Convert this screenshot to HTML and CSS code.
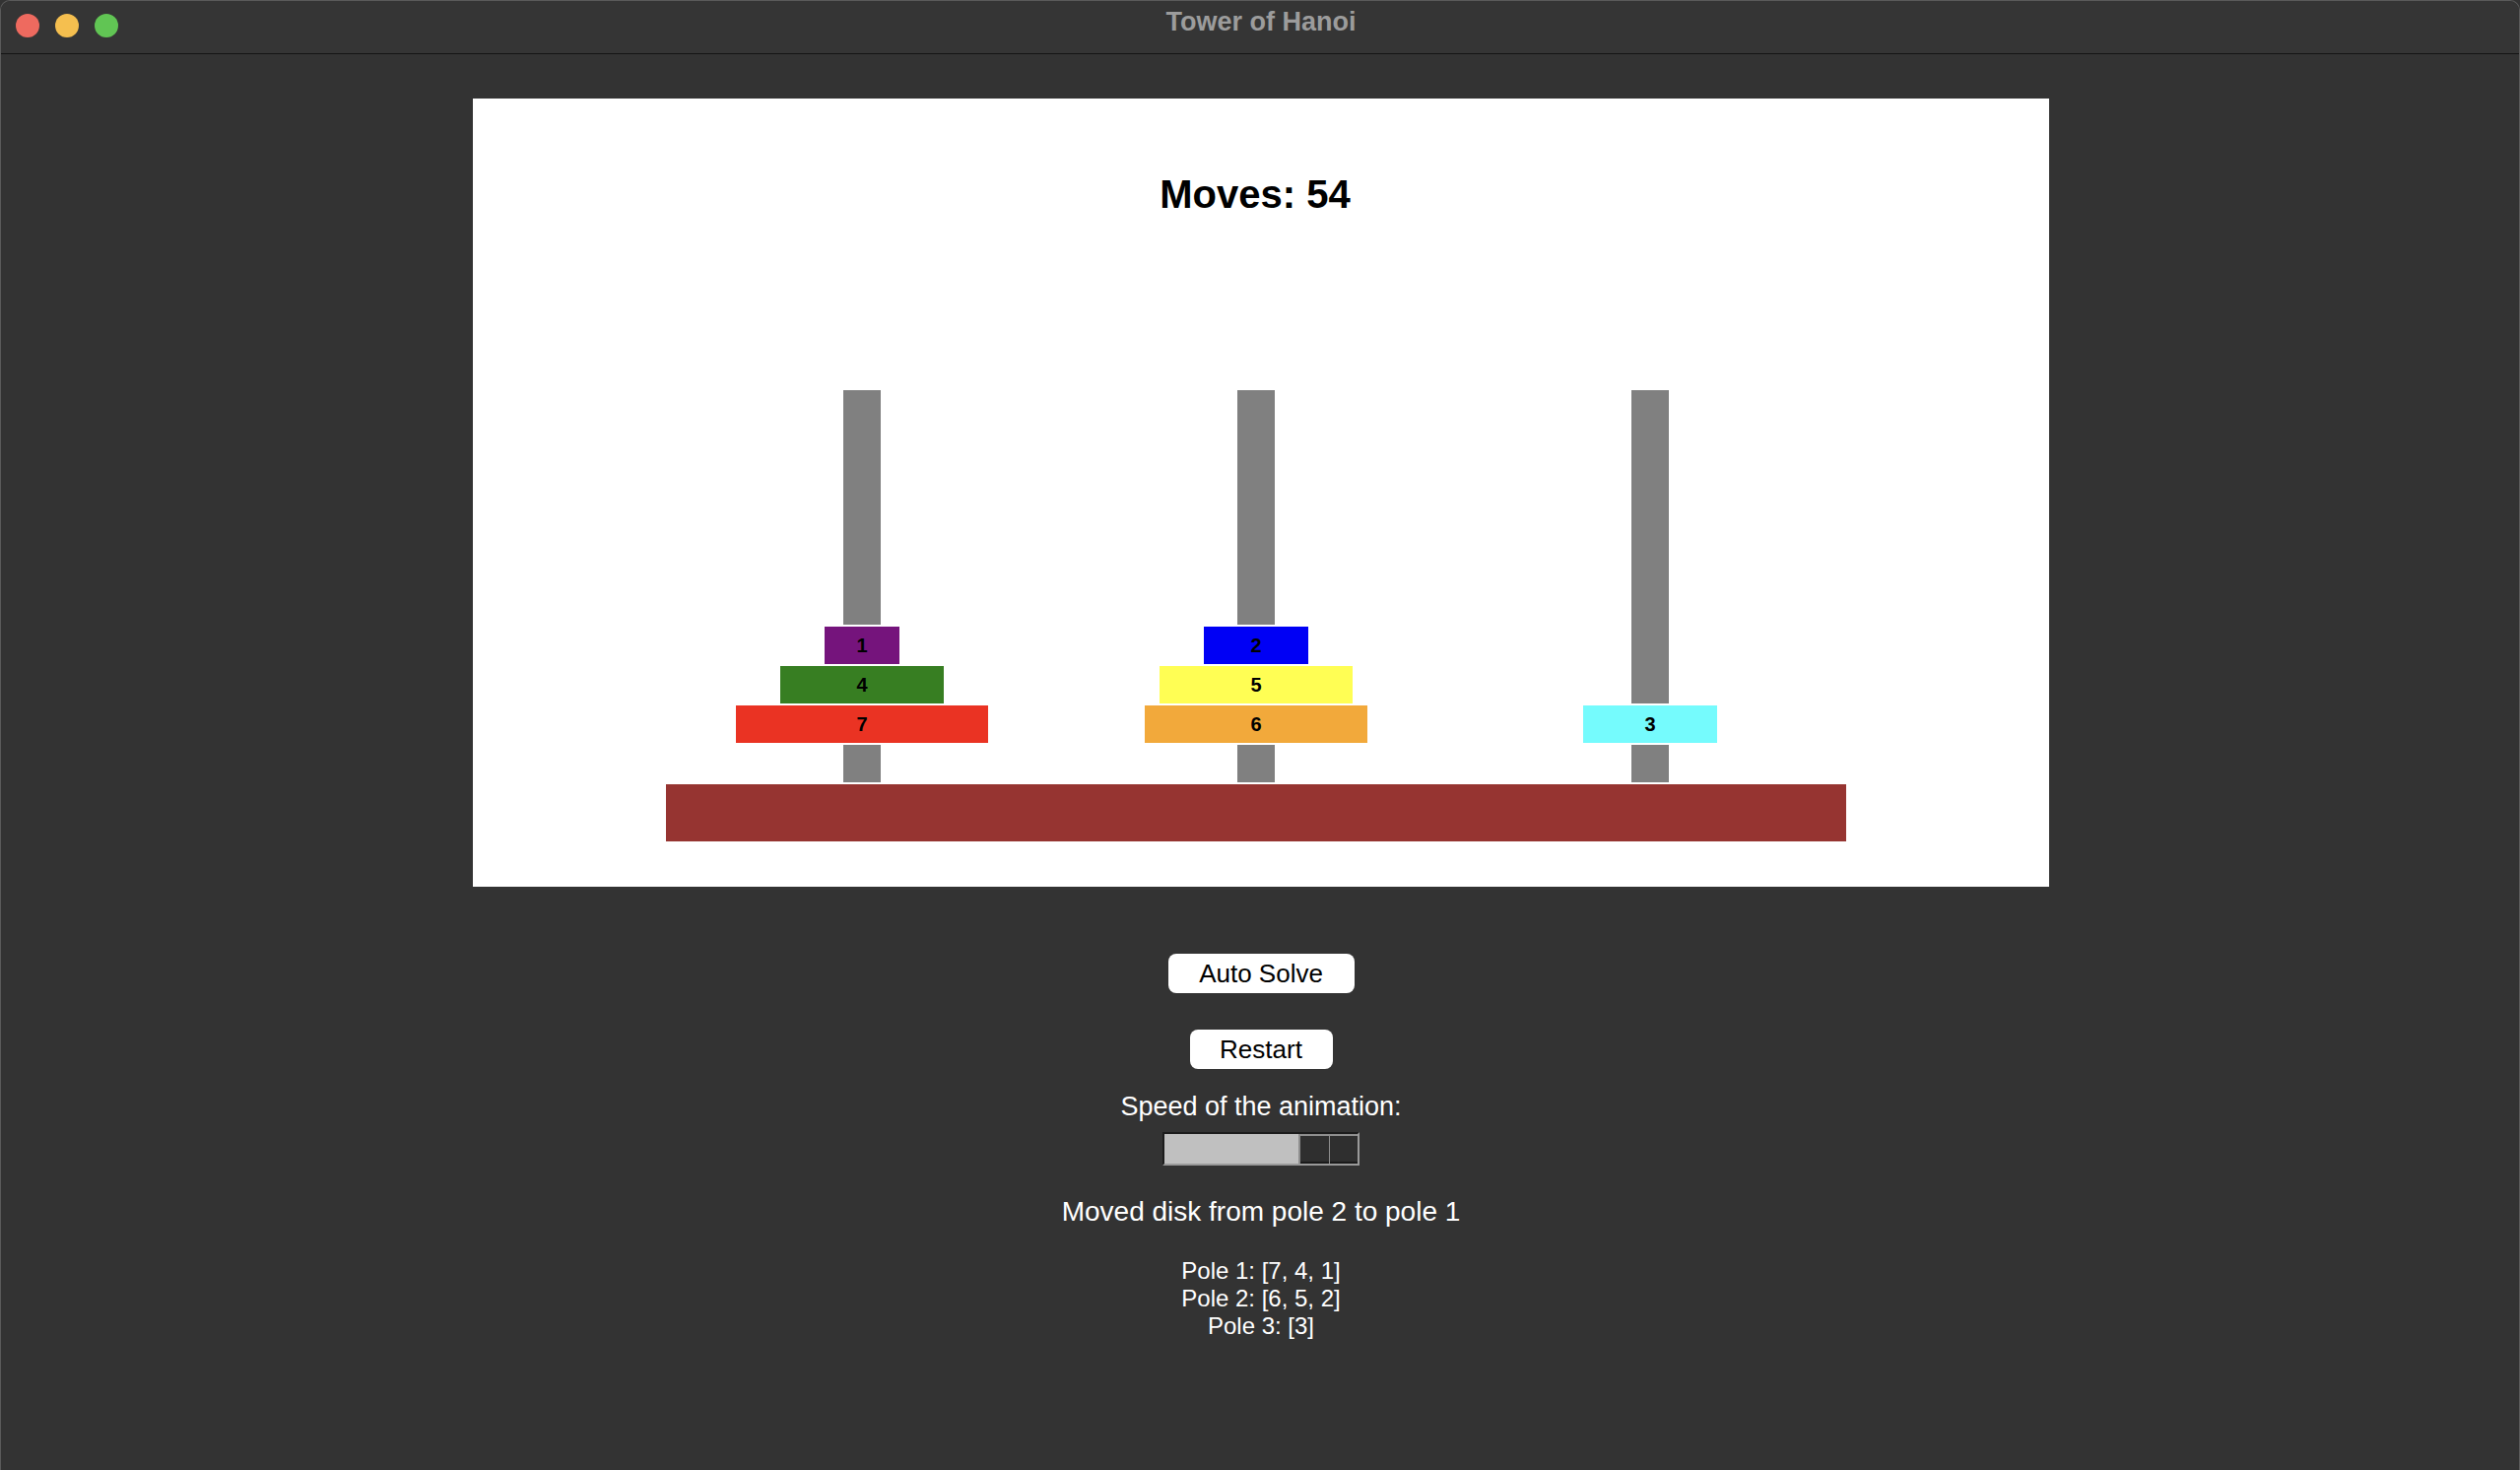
FILE: index.html
```html
<!DOCTYPE html>
<html lang="en">
<head>
<meta charset="utf-8">
<title>Tower of Hanoi</title>
<link rel="stylesheet" href="styles.css">
</head>
<body>
<div class="window">
  <header class="titlebar">
    <div class="lights">
      <span class="light light-red"></span>
      <span class="light light-yellow"></span>
      <span class="light light-green"></span>
    </div>
    <div class="title">Tower of Hanoi</div>
    <div class="spacer"></div>
  </header>
  <main class="content">
    <div class="board">
      <svg class="board-svg" width="1600" height="800" viewBox="0 0 1600 800" xmlns="http://www.w3.org/2000/svg">
        <text class="moves" x="794" y="111" text-anchor="middle">Moves: 54</text>
        <g class="poles-g">
          <rect x="375" y="295" width="40" height="400" fill="#808080" stroke="#fff" stroke-width="2"/>
          <rect x="775" y="295" width="40" height="400" fill="#808080" stroke="#fff" stroke-width="2"/>
          <rect x="1175" y="295" width="40" height="400" fill="#808080" stroke="#fff" stroke-width="2"/>
        </g>
        <rect x="195" y="695" width="1200" height="60" fill="#963431" stroke="#fff" stroke-width="2"/>
        <g class="disks">
          <rect x="266" y="615" width="258" height="40" fill="#EA3323" stroke="#fff" stroke-width="2"/>
          <text class="disk-label" x="395" y="642" text-anchor="middle">7</text>
          <rect x="311" y="575" width="168" height="40" fill="#377E22" stroke="#fff" stroke-width="2"/>
          <text class="disk-label" x="395" y="602" text-anchor="middle">4</text>
          <rect x="356" y="535" width="78" height="40" fill="#75147C" stroke="#fff" stroke-width="2"/>
          <text class="disk-label" x="395" y="562" text-anchor="middle">1</text>

          <rect x="681" y="615" width="228" height="40" fill="#F2A93B" stroke="#fff" stroke-width="2"/>
          <text class="disk-label" x="795" y="642" text-anchor="middle">6</text>
          <rect x="696" y="575" width="198" height="40" fill="#FFFE54" stroke="#fff" stroke-width="2"/>
          <text class="disk-label" x="795" y="602" text-anchor="middle">5</text>
          <rect x="741" y="535" width="108" height="40" fill="#0000F5" stroke="#fff" stroke-width="2"/>
          <text class="disk-label" x="795" y="562" text-anchor="middle">2</text>

          <rect x="1126" y="615" width="138" height="40" fill="#75FBFD" stroke="#fff" stroke-width="2"/>
          <text class="disk-label" x="1195" y="642" text-anchor="middle">3</text>
        </g>
      </svg>
    </div>
    <button class="btn btn-auto">Auto Solve</button>
    <button class="btn btn-restart">Restart</button>
    <div class="label speed-label">Speed of the animation:</div>
    <div class="slider">
      <div class="slider-trough"></div>
      <div class="slider-handle">
        <span class="handle-cell"></span>
        <span class="handle-cell"></span>
      </div>
    </div>
    <div class="label status">Moved disk from pole 2 to pole 1</div>
    <div class="pole-state">
      <div>Pole 1: [7, 4, 1]</div>
      <div>Pole 2: [6, 5, 2]</div>
      <div>Pole 3: [3]</div>
    </div>
  </main>
</div>
</body>
</html>
```
FILE: styles.css
```css
html, body {
  margin: 0;
  padding: 0;
  background: #333333;
  height: 100%;
  overflow: hidden;
}

.window {
  box-sizing: border-box;
  height: 100vh;
  border: 1px solid #5a5a5a;
  border-bottom: none;
  border-radius: 10px 10px 0 0;
  background: #333333;
  font-family: "Liberation Sans", Arial, sans-serif;
}

.titlebar {
  height: 53px;
  border-bottom: 1px solid #141414;
  display: grid;
  grid-template-columns: 1fr auto 1fr;
  align-items: start;
  background: #353535;
  border-radius: 10px 10px 0 0;
}

.lights {
  display: flex;
  gap: 16px;
  padding-left: 15px;
  padding-top: 13px;
}

.light {
  width: 24px;
  height: 24px;
  border-radius: 50%;
  display: block;
}
.light-red { background: #EE6A5F; }
.light-yellow { background: #F5BF4F; }
.light-green { background: #61C554; }

.title {
  font-weight: bold;
  font-size: 27px;
  line-height: 43px;
  color: #9c9c9c;
  text-align: center;
  padding-left: 2px;
}

.content {
  display: flex;
  flex-direction: column;
  align-items: center;
  padding-left: 2px;
}

.board {
  margin-top: 45px;
  width: 1600px;
  height: 800px;
  background: #ffffff;
}

.board-svg {
  display: block;
  shape-rendering: crispEdges;
}

.moves {
  font-family: "Liberation Sans", Arial, sans-serif;
  font-weight: bold;
  font-size: 40px;
  fill: #000;
}

.disk-label {
  font-family: "Liberation Sans", Arial, sans-serif;
  font-weight: bold;
  font-size: 20px;
  fill: #000;
}

.btn {
  display: block;
  height: 40px;
  padding: 0 30px;
  border: none;
  border-radius: 8px;
  background: #ffffff;
  color: #000;
  font-family: "Liberation Sans", Arial, sans-serif;
  font-size: 26px;
  line-height: 40px;
}

.btn-auto {
  margin-top: 68px;
  width: 189px;
}

.btn-restart {
  margin-top: 37px;
  width: 145px;
}

.label {
  color: #ffffff;
  font-size: 27.5px;
  line-height: 32px;
  text-align: center;
}

.speed-label {
  margin-top: 22px;
  font-size: 27px;
}

.slider {
  margin-top: 10px;
  width: 200px;
  height: 34px;
  box-sizing: border-box;
  display: flex;
  border-top: 2px solid #1c1c1c;
  border-left: 2px solid #1c1c1c;
  border-bottom: 2px solid #9a9a9a;
  border-right: 2px solid #9a9a9a;
  background: #c0c0c0;
}

.slider-trough {
  flex: 1;
  background: #c0c0c0;
}

.slider-handle {
  width: 60px;
  display: flex;
  gap: 1px;
  background: #8e8e8e;
  padding: 2px 0 0 2px;
  box-sizing: border-box;
}

.handle-cell {
  flex: 1;
  background: #2f2f2f;
  border-bottom: 2px solid #1a1a1a;
}

.status {
  margin-top: 31px;
  font-size: 28px;
}

.pole-state {
  margin-top: 30px;
  color: #ffffff;
  font-size: 24px;
  line-height: 28px;
  text-align: center;
}
```
